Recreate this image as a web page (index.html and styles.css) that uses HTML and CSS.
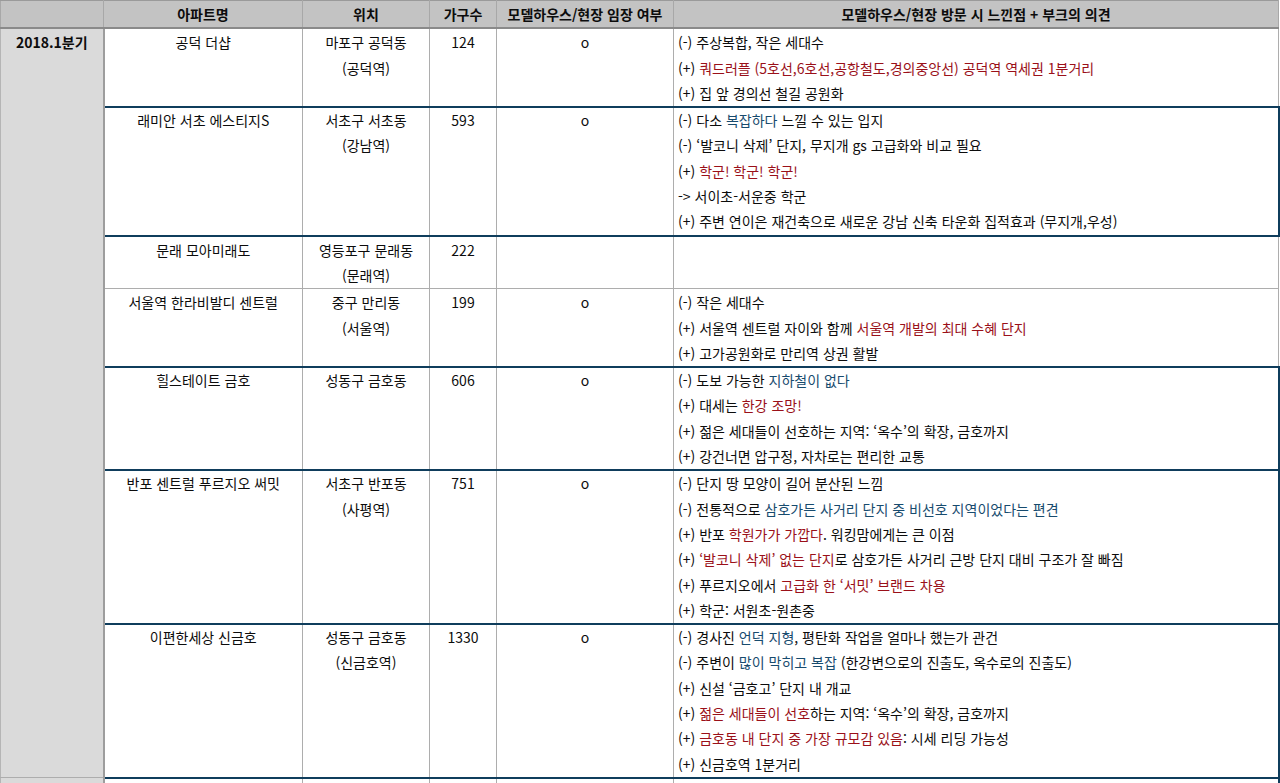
FILE: index.html
```html
<!DOCTYPE html>
<html lang="ko">
<head>
<meta charset="utf-8">
<title>임장 기록</title>
<link rel="stylesheet" href="styles.css">
</head>
<body>
<table class="sheet">
  <colgroup>
    <col class="c-q"><col class="c-name"><col class="c-loc"><col class="c-cnt"><col class="c-visit"><col class="c-note">
  </colgroup>
  <thead>
    <tr>
      <th class="q-head"></th>
      <th>아파트명</th>
      <th>위치</th>
      <th>가구수</th>
      <th>모델하우스/현장 임장 여부</th>
      <th>모델하우스/현장 방문 시 느낀점 + 부크의 의견</th>
    </tr>
  </thead>
  <tbody>
    <tr>
      <td class="quarter" rowspan="7">2018.1분기</td>
      <td class="ctr">공덕 더샵</td>
      <td class="ctr">마포구 공덕동<br>(공덕역)</td>
      <td class="ctr">124</td>
      <td class="ctr">o</td>
      <td class="note">
        <div>(-) 주상복합, 작은 세대수</div>
        <div>(+) <span class="red">쿼드러플 (5호선,6호선,공항철도,경의중앙선) 공덕역 역세권 1분거리</span></div>
        <div>(+) 집 앞 경의선 철길 공원화</div>
      </td>
    </tr>
    <tr class="hl">
      <td class="ctr first">래미안 서초 에스티지S</td>
      <td class="ctr">서초구 서초동<br>(강남역)</td>
      <td class="ctr">593</td>
      <td class="ctr">o</td>
      <td class="note last">
        <div>(-) 다소 <span class="blue">복잡하다</span> 느낄 수 있는 입지</div>
        <div>(-) ‘발코니 삭제’ 단지, 무지개 gs 고급화와 비교 필요</div>
        <div>(+) <span class="red">학군! 학군! 학군!</span></div>
        <div>-&gt; 서이초-서운중 학군</div>
        <div>(+) 주변 연이은 재건축으로 새로운 강남 신축 타운화 집적효과 (무지개,우성)</div>
      </td>
    </tr>
    <tr>
      <td class="ctr">문래 모아미래도</td>
      <td class="ctr">영등포구 문래동<br>(문래역)</td>
      <td class="ctr">222</td>
      <td class="ctr"></td>
      <td class="note"></td>
    </tr>
    <tr>
      <td class="ctr">서울역 한라비발디 센트럴</td>
      <td class="ctr">중구 만리동<br>(서울역)</td>
      <td class="ctr">199</td>
      <td class="ctr">o</td>
      <td class="note">
        <div>(-) 작은 세대수</div>
        <div>(+) 서울역 센트럴 자이와 함께 <span class="red">서울역 개발의 최대 수혜 단지</span></div>
        <div>(+) 고가공원화로 만리역 상권 활발</div>
      </td>
    </tr>
    <tr class="hl">
      <td class="ctr first">힐스테이트 금호</td>
      <td class="ctr">성동구 금호동</td>
      <td class="ctr">606</td>
      <td class="ctr">o</td>
      <td class="note last">
        <div>(-) 도보 가능한 <span class="blue">지하철이 없다</span></div>
        <div>(+) 대세는 <span class="red">한강 조망!</span></div>
        <div>(+) 젊은 세대들이 선호하는 지역: ‘옥수’의 확장, 금호까지</div>
        <div>(+) 강건너면 압구정, 자차로는 편리한 교통</div>
      </td>
    </tr>
    <tr class="hl">
      <td class="ctr first">반포 센트럴 푸르지오 써밋</td>
      <td class="ctr">서초구 반포동<br>(사평역)</td>
      <td class="ctr">751</td>
      <td class="ctr">o</td>
      <td class="note last">
        <div>(-) 단지 땅 모양이 길어 분산된 느낌</div>
        <div>(-) 전통적으로 <span class="blue">삼호가든 사거리 단지 중 비선호 지역이었다는 편견</span></div>
        <div>(+) 반포 <span class="red">학원가가 가깝다</span>. 워킹맘에게는 큰 이점</div>
        <div>(+) <span class="red">‘발코니 삭제’ 없는 단지</span>로 삼호가든 사거리 근방 단지 대비 구조가 잘 빠짐</div>
        <div>(+) 푸르지오에서 <span class="red">고급화 한 ‘서밋’ 브랜드 차용</span></div>
        <div>(+) 학군: 서원초-원촌중</div>
      </td>
    </tr>
    <tr class="hl">
      <td class="ctr first">이편한세상 신금호</td>
      <td class="ctr">성동구 금호동<br>(신금호역)</td>
      <td class="ctr">1330</td>
      <td class="ctr">o</td>
      <td class="note last">
        <div>(-) 경사진 <span class="blue">언덕 지형</span>, 평탄화 작업을 얼마나 했는가 관건</div>
        <div>(-) 주변이 <span class="blue">많이 막히고 복잡</span> (한강변으로의 진출도, 옥수로의 진출도)</div>
        <div>(+) 신설 ‘금호고’ 단지 내 개교</div>
        <div>(+) <span class="red">젊은 세대들이 선호</span>하는 지역: ‘옥수’의 확장, 금호까지</div>
        <div>(+) <span class="red">금호동 내 단지 중 가장 규모감 있음</span>: 시세 리딩 가능성</div>
        <div>(+) 신금호역 1분거리</div>
      </td>
    </tr>
    <tr class="hl">
      <td class="quarter"></td>
      <td class="ctr first">&nbsp;</td>
      <td class="ctr"></td>
      <td class="ctr"></td>
      <td class="ctr"></td>
      <td class="note last"></td>
    </tr>
  </tbody>
</table>
</body>
</html>
```
FILE: styles.css
```css
html, body {
  margin: 0;
  padding: 0;
  background: #ffffff;
}

body {
  font-family: "Noto Sans CJK KR", "Noto Sans", sans-serif;
  font-size: 14px;
  color: #0c0c0c;
}

.sheet {
  border-collapse: collapse;
  table-layout: fixed;
  width: 1278px;
}

.c-q { width: 103px; }
.c-name { width: 199px; }
.c-loc { width: 127px; }
.c-cnt { width: 67px; }
.c-visit { width: 177px; }
.c-note { width: 605px; }

.sheet th {
  background: #c3c3c3;
  font-weight: 700;
  text-align: center;
  line-height: 25.3px;
  padding: 1px 4px 0;
  border: 1px solid #a8a8a8;
  border-top: 1px solid #9a9a9a;
  border-bottom: 2px solid #8a8a8a;
  white-space: nowrap;
}

.sheet td {
  vertical-align: top;
  line-height: 25.3px;
  padding: 1px 4px 0;
  border: 1px solid #adadad;
  white-space: nowrap;
}

.sheet .hl td {
  padding-top: 0;
}

.sheet td.quarter {
  background: #dadada;
  font-weight: 700;
  text-align: center;
  border-right: 2px solid #9d9d9d;
  border-left: 1px solid #b5b5b5;
}

.ctr {
  text-align: center;
}

.note {
  text-align: left;
}

.hl td:not(.quarter) {
  border-top: 2px solid #0f3d5c;
  border-bottom: 2px solid #0f3d5c;
}

.hl td.first {
  border-left: 2px solid #0f3d5c;
}

.hl td.last {
  border-right: 2px solid #0f3d5c;
}

.red {
  color: #9a1019;
}

.blue {
  color: #174b6e;
}
```
